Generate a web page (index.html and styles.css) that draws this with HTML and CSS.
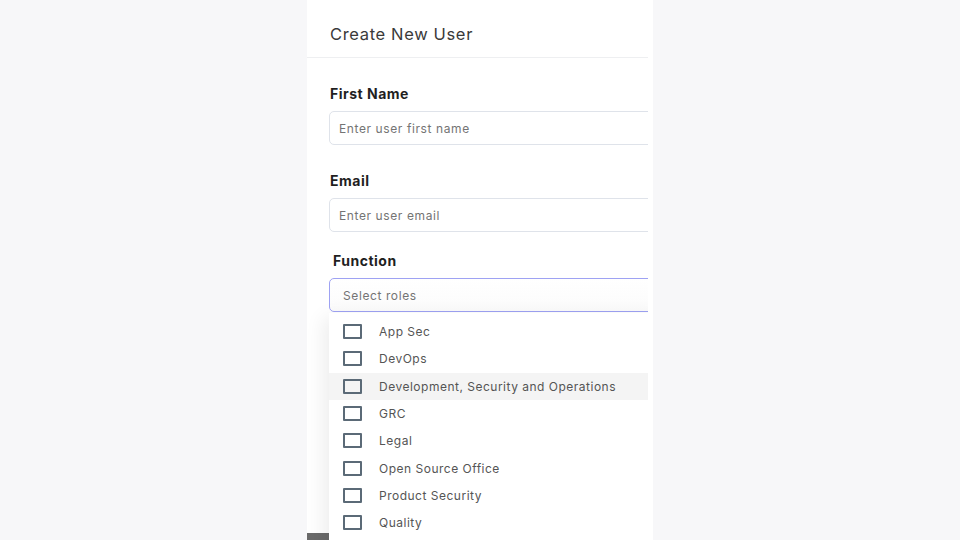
FILE: index.html
```html
<!DOCTYPE html>
<html lang="en">
<head>
<meta charset="utf-8">
<title>Create New User</title>
<link rel="stylesheet" href="styles.css">
</head>
<body>
<div class="page">
  <div class="panel">
    <div class="inner">
      <div class="header">Create New User</div>
      <form class="form">
        <div class="field">
          <label class="label">First Name</label>
          <div class="input"><span class="ph">Enter user first name</span></div>
        </div>
        <div class="field">
          <label class="label">Email</label>
          <div class="input"><span class="ph">Enter user email</span></div>
        </div>
        <div class="field field-fn">
          <label class="label label-fn">Function</label>
          <div class="input select"><span class="ph">Select roles</span></div>
          <ul class="menu">
            <li class="opt"><span class="box"></span><span>App Sec</span></li>
            <li class="opt"><span class="box"></span><span>DevOps</span></li>
            <li class="opt hover"><span class="box"></span><span>Development, Security and Operations</span></li>
            <li class="opt"><span class="box"></span><span>GRC</span></li>
            <li class="opt"><span class="box"></span><span>Legal</span></li>
            <li class="opt"><span class="box"></span><span>Open Source Office</span></li>
            <li class="opt"><span class="box"></span><span>Product Security</span></li>
            <li class="opt"><span class="box"></span><span>Quality</span></li>
          </ul>
        </div>
      </form>
      <div class="footer"></div>
    </div>
  </div>
</div>
</body>
</html>
```
FILE: styles.css
```css
* { box-sizing: border-box; }
html, body { margin: 0; padding: 0; }
body {
  background: #f7f7f9;
  font-family: Inter, "Liberation Sans", sans-serif;
  width: 960px;
  height: 540px;
  overflow: hidden;
}
.page {
  display: flex;
  justify-content: flex-start;
  padding-left: 307px;
  height: 540px;
}
.panel {
  width: 346px;
  height: 540px;
  background: #fff;
  padding-right: 5px;
}
.inner {
  width: 341px;
  height: 540px;
  overflow: hidden;
  display: flex;
  flex-direction: column;
}
.header {
  height: 58px;
  flex: none;
  border-bottom: 1px solid #eeeff1;
  padding-left: 23px;
  padding-top: 24px;
  font-size: 16.5px;
  color: #3a3a3a;
  letter-spacing: 0.65px;
  line-height: 20px;
}
.form {
  padding: 28px 0 0 22px;
  margin: 0;
  display: flex;
  flex-direction: column;
  flex: none;
}
.field {
  display: flex;
  flex-direction: column;
  margin-bottom: 28px;
  position: relative;
}
.field-fn { margin-top: -7px; margin-bottom: 0; }
.label {
  font-size: 14px;
  font-weight: 700;
  color: #1f1f1f;
  line-height: 16px;
  height: 16px;
  margin-bottom: 9px;
  padding-left: 1px;
  letter-spacing: 0.5px;
}
.label-fn { padding-left: 4px; }
.input {
  width: 340px;
  height: 34px;
  border: 1px solid #dfe3ea;
  border-radius: 5px;
  display: flex;
  align-items: center;
  padding-left: 9px;
}
.select {
  border-color: #9ea2f3;
  padding-left: 13px;
  background: linear-gradient(#fff, #fbfbfb);
}
.ph {
  font-size: 12px;
  color: #747474;
  letter-spacing: 0.6px;
}
.menu {
  position: absolute;
  left: 0;
  top: 60px;
  width: 340px;
  margin: 0;
  padding: 5px 0 12px;
  list-style: none;
  background: #fff;
  box-shadow: -6px 4px 18px rgba(0, 0, 0, 0.07);
  z-index: 2;
}
.opt {
  height: 27.3px;
  display: flex;
  align-items: center;
  padding-left: 14px;
  font-size: 12px;
  color: #555;
  letter-spacing: 0.5px;
}
.opt.hover { background: #f4f4f4; }
.box {
  width: 19px;
  height: 15px;
  border: 2px solid #5b6a77;
  border-radius: 1px;
  margin-right: 17px;
  flex: none;
}
.footer {
  margin-top: auto;
  height: 7px;
  width: 100%;
  background: #6a6a6a;
  flex: none;
}
```
